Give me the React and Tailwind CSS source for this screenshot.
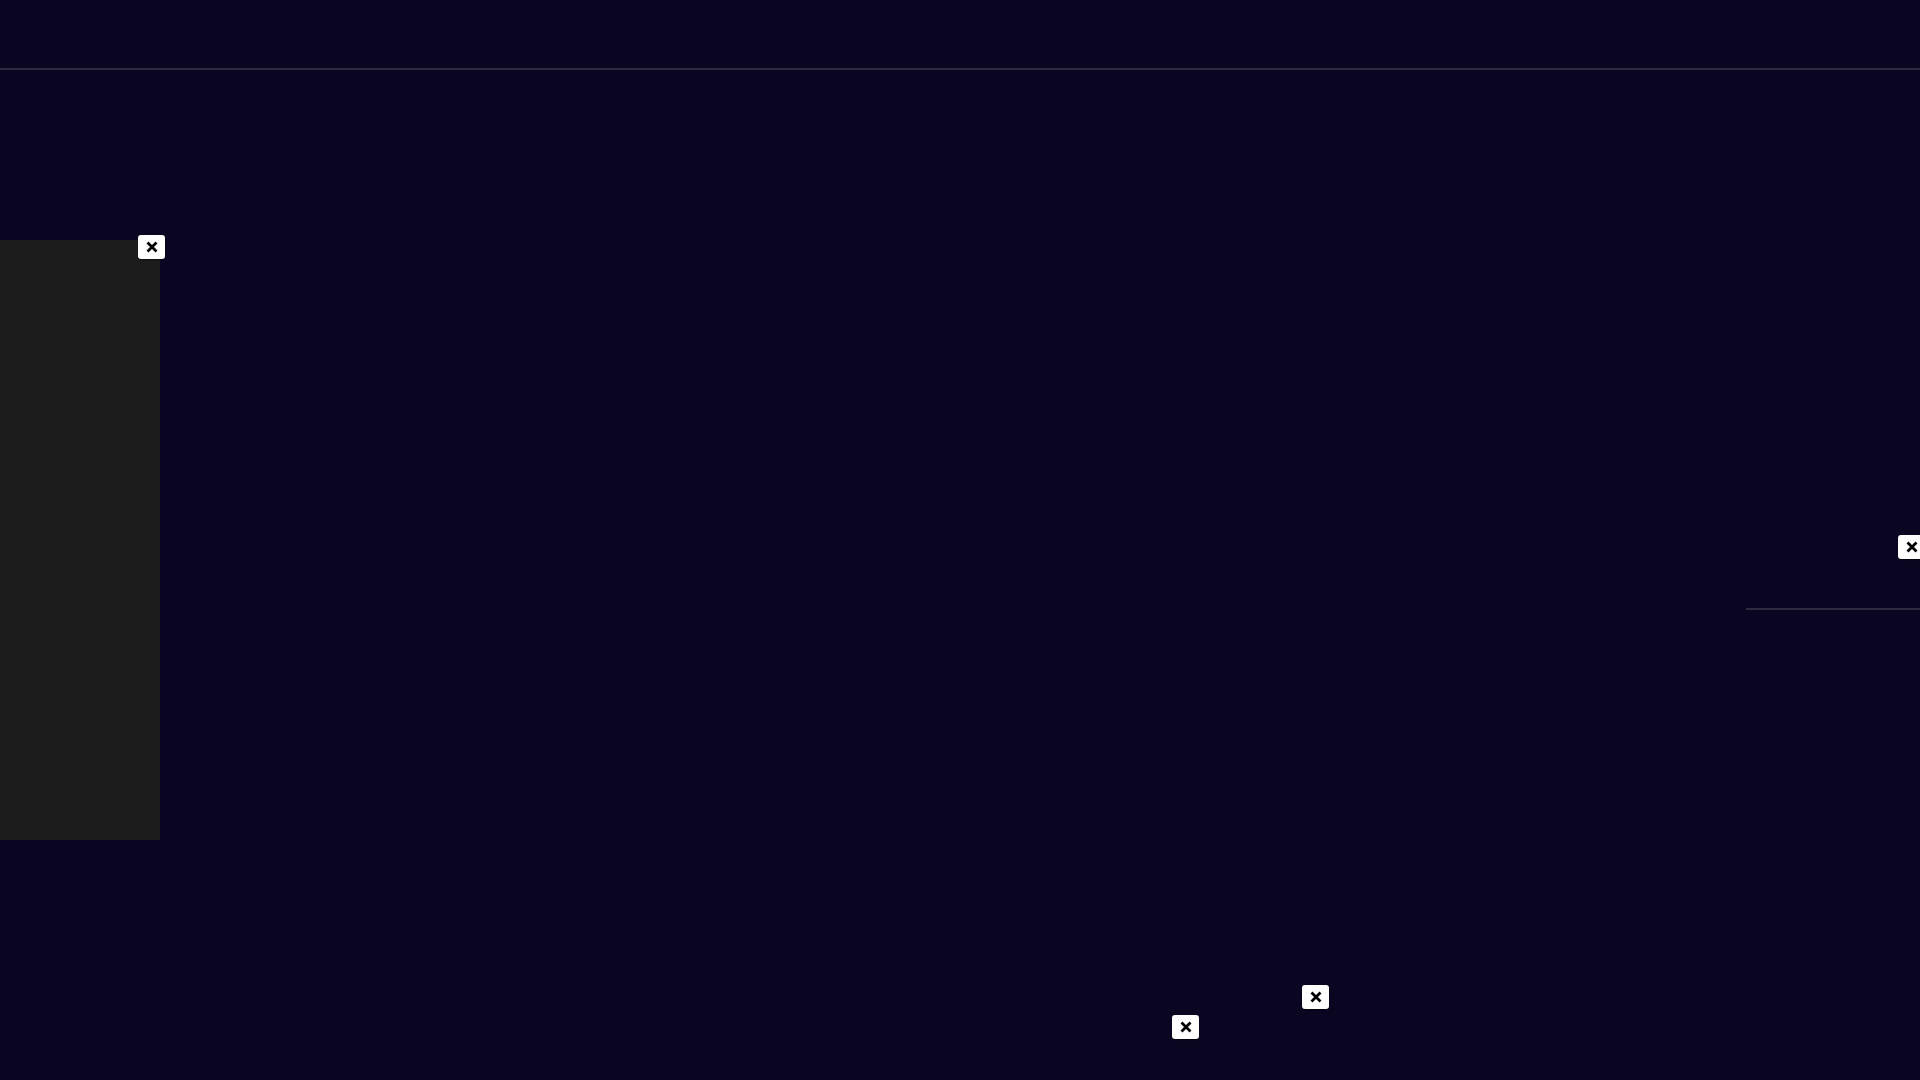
function CloseButton({ className = '' }) {
  return (
    <button
      type="button"
      className={`absolute flex h-[24px] w-[27px] items-center justify-center rounded-[3px] bg-white shadow-[0_1px_1px_rgba(0,0,0,0.45)] ${className}`}
    >
      <svg width="12" height="12" viewBox="0 0 12 12" fill="none">
        <path d="M1.5 1.5L10.5 10.5M10.5 1.5L1.5 10.5" stroke="#000" strokeWidth="2.8" />
      </svg>
    </button>
  );
}

export default function App() {
  return (
    <div className="relative h-[1080px] w-full overflow-hidden bg-[#0a0520] font-['Liberation_Sans',sans-serif]">
      <header className="h-[70px] border-b-2 border-[#2d2a3f]" />

      <main className="flex h-[1010px]">
        <aside className="relative mt-[170px] h-[600px] w-[160px] bg-[#1c1c1c]">
          <CloseButton className="left-[138px] top-[-5px]" />
        </aside>

        <div className="flex-1" />

        <section className="relative w-[174px]">
          <CloseButton className="left-[152px] top-[465px]" />
          <div className="mt-[538px] border-t-2 border-[#2d2a3f]" />
        </section>
      </main>

      <CloseButton className="left-[1302px] top-[985px]" />
      <CloseButton className="left-[1172px] top-[1015px]" />
    </div>
  );
}
